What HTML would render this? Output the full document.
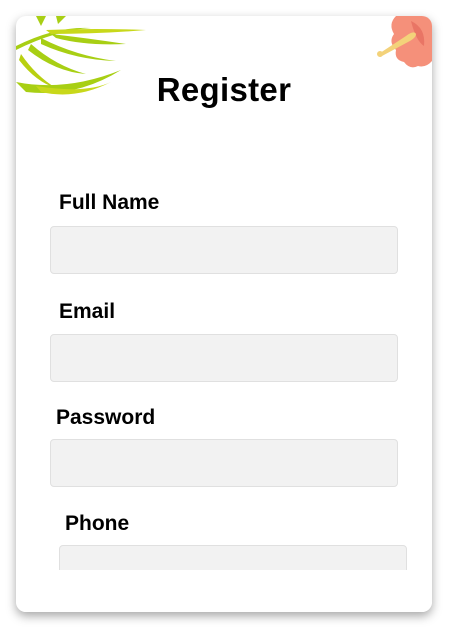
<!DOCTYPE html>
<html><head><style>
html,body{margin:0;padding:0;background:#fff;width:456px;height:636px;overflow:hidden;font-family:"Liberation Sans",sans-serif;}
.card{position:absolute;left:16px;top:16px;width:416px;height:596px;background:#fff;border-radius:10px;box-shadow:0 4px 10px rgba(0,0,0,0.35);overflow:hidden;}
.t{position:absolute;left:0;width:416px;top:55px;text-align:center;font-size:33px;font-weight:bold;color:#000;letter-spacing:0.3px}
.l{position:absolute;font-size:21px;font-weight:bold;color:#000}
.i{position:absolute;width:346px;height:46px;background:#f2f2f2;border:1px solid #e0e0e0;border-radius:4px}
.clip{position:absolute;left:0;top:554px;width:416px;height:42px;background:#fff}
</style></head><body>
<div class="card">
<svg style="position:absolute;left:0;top:0" width="140" height="80" viewBox="0 0 140 80">
<g fill="#a8cf14">
<path d="M0 30 Q40 10 75 12 Q40 14 0 34Z"/>
<path d="M30 14 Q80 12 130 14 Q85 18 35 18Z" fill="#c8d81a"/>
<path d="M35 18 Q70 22 110 28 Q70 30 40 22Z"/>
<path d="M25 22 Q60 40 100 45 Q60 44 25 28Z"/>
<path d="M15 28 Q40 50 70 58 Q40 56 12 34Z"/>
<path d="M5 38 Q20 60 40 72 Q20 66 3 44Z" fill="#b8d010"/>
<path d="M0 66 Q50 76 105 54 Q60 82 10 76Z"/>
<path d="M20 70 Q70 78 95 66 Q60 84 25 76Z" fill="#c8d81a"/>
<path d="M20 0 L25 10 L30 0Z M40 0 L42 8 L50 0Z"/>
</g></svg>
<svg style="position:absolute;left:360px;top:0" width="56" height="56" viewBox="0 0 56 56">
<path d="M20 0 L56 0 L56 45 Q50 52 42 50 Q34 54 28 46 Q18 44 20 34 Q12 26 18 18 Q12 8 20 0Z" fill="#f5907a"/>
<path d="M35 5 Q50 12 48 30 Q40 25 35 5Z" fill="#e46a5c" opacity=".7"/>
<path d="M4 37 L30 20 Q38 14 40 18 Q40 22 32 26 L6 40Z" fill="#f3d27a"/>
<circle cx="4" cy="38" r="3" fill="#f3d27a"/>
</svg>
<div class="t">Register</div>
<div class="l" style="left:43px;top:175px">Full Name</div>
<div class="i" style="left:34px;top:210px"></div>
<div class="l" style="left:43px;top:284px">Email</div>
<div class="i" style="left:34px;top:318px"></div>
<div class="l" style="left:40px;top:390px">Password</div>
<div class="i" style="left:34px;top:423px"></div>
<div class="l" style="left:49px;top:496px">Phone</div>
<div class="i" style="left:43px;top:529px"></div>
<div class="clip"></div>
</div>
</body></html>
